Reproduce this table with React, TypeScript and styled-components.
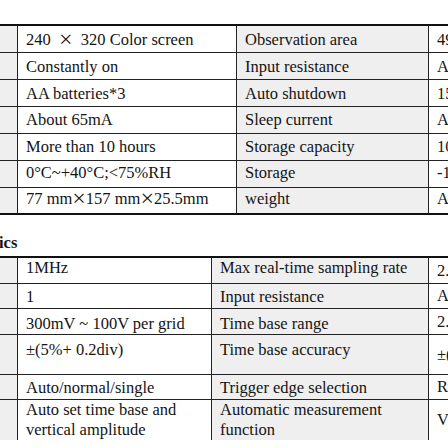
import React from "react";
import styled, { createGlobalStyle } from "styled-components";

const GlobalStyle = createGlobalStyle`
  html, body {
    margin: 0;
    padding: 0;
    background: #ffffff;
  }
  body {
    font-family: "Liberation Serif", "Times New Roman", serif;
    color: #141414;
  }
`;

const Page = styled.div`
  width: 448px;
  height: 448px;
  overflow: hidden;
  padding-top: 24px;
  box-sizing: border-box;
`;

const Table = styled.div`
  width: 640px;
  border-top: 2px solid #111;
  border-bottom: 2px solid #111;
`;

const Cell = styled.div<{ $gray?: boolean; $center?: boolean }>`
  box-sizing: border-box;
  padding-left: 8px;
  white-space: nowrap;
  background: ${(p) => (p.$gray ? "#efefef" : "#ffffff")};
  border-left: 1px solid #222;
  font-size: 16.5px;
  line-height: 20px;

  &:first-child {
    border-left: none;
    padding-left: 0;
  }

  ${(p) =>
    p.$center &&
    `
    display: flex;
    align-items: center;
    padding-top: 0 !important;
  `}
`;

const Row = styled.div<{ $cols: string; $h: number; $pad: number }>`
  display: grid;
  grid-template-columns: ${(p) => p.$cols};
  height: ${(p) => p.$h}px;
  box-sizing: border-box;
  border-bottom: 1px solid #222;

  &:last-child {
    border-bottom: none;
  }

  & > ${Cell} {
    padding-top: ${(p) => p.$pad}px;
  }
`;

const Heading = styled.div`
  font-weight: bold;
  font-size: 16.5px;
  line-height: 20px;
  padding: 18px 0 3px;
  margin-left: -1px;
`;

// big serif multiplication sign, like the one in the scan
const Mul = styled.span`
  font-size: 24px;
  line-height: 0;
  vertical-align: -2px;
`;

const X = () => <Mul>×</Mul>;

const specs: { a: React.ReactNode; b: string; c: string; h: number; pad: number }[] = [
  { a: <>240{"\u00a0\u00a0"}<X />{"\u00a0\u00a0"}320 Color screen</>, b: "Observation area", c: "49 × 6 grids", h: 27, pad: 4 },
  { a: "Constantly on", b: "Input resistance", c: "About 1MΩ", h: 27, pad: 4 },
  { a: "AA batteries*3", b: "Auto shutdown", c: "15 minutes", h: 27, pad: 4 },
  { a: "About 65mA", b: "Sleep current", c: "About 10uA", h: 27, pad: 3 },
  { a: "More than 10 hours", b: "Storage capacity", c: "10 groups", h: 27, pad: 3 },
  { a: "0°C~+40°C;<75%RH", b: "Storage", c: "-10°C~+50°C", h: 27, pad: 2 },
  { a: <>77 mm<X />157 mm<X />25.5mm</>, b: "weight", c: "About 300g", h: 25, pad: 1 },
];

const scope: { a: React.ReactNode; b: React.ReactNode; c: string; h: number; pad: number }[] = [
  { a: "1MHz", b: "Max real-time sampling rate", c: "2.5MSa/s", h: 26, pad: 0 },
  { a: "1", b: "Input resistance", c: "About 1MΩ", h: 25, pad: 3 },
  { a: "300mV ~ 100V per grid", b: "Time base range", c: "2.5us ~ 10s", h: 26, pad: 5 },
  { a: "±(5%+ 0.2div)", b: "Time base accuracy", c: "±(0.01%)", h: 40, pad: 5 },
  { a: "Auto/normal/single", b: "Trigger edge selection", c: "Rising/falling", h: 25, pad: 3 },
  {
    a: <>Auto set time base and<br />vertical amplitude</>,
    b: <>Automatic measurement<br />function</>,
    c: "Vpp, Vmax, Vmin",
    h: 38,
    pad: 0,
  },
];

const App: React.FC = () => {
  return (
    <>
      <GlobalStyle />
      <Page>
        <Table>
          {specs.map((r, i) => (
            <Row key={i} $cols="17px 219px 192px 212px" $h={r.h} $pad={r.pad}>
              <Cell $gray />
              <Cell>{r.a}</Cell>
              <Cell $gray>{r.b}</Cell>
              <Cell>{r.c}</Cell>
            </Row>
          ))}
        </Table>

        <Heading>ics</Heading>

        <Table>
          {scope.map((r, i) => (
            <Row key={i} $cols="17px 194px 217px 212px" $h={r.h} $pad={r.pad}>
              <Cell $gray />
              <Cell>{r.a}</Cell>
              <Cell $gray>{r.b}</Cell>
              <Cell $center>{r.c}</Cell>
            </Row>
          ))}
        </Table>
      </Page>
    </>
  );
};

export default App;
